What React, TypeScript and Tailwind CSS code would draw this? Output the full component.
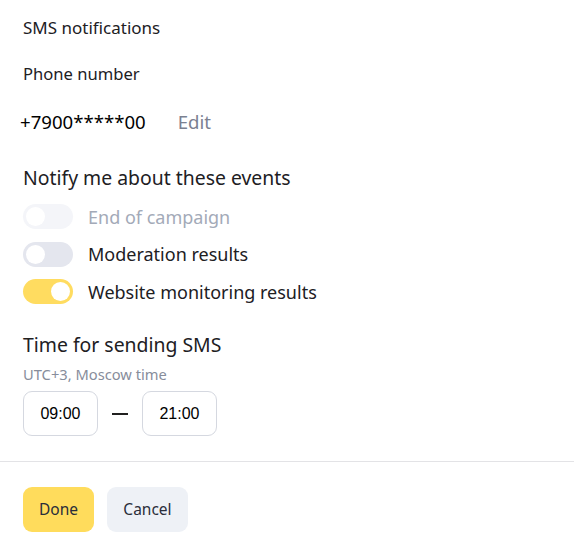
import { Fragment } from "react";

type ToggleState = "disabled" | "off" | "on";

interface NotifyOption {
	label: string;
	state: ToggleState;
}

const options: NotifyOption[] = [
	{ label: "End of campaign", state: "disabled" },
	{ label: "Moderation results", state: "off" },
	{ label: "Website monitoring results", state: "on" },
];

function Toggle({ state }: { state: ToggleState }) {
	const track =
		state === "on" ? "bg-[#ffdc60]" : state === "off" ? "bg-[#e4e6ee]" : "bg-[#f4f5f9]";
	return (
		<span className={`flex h-[25px] w-[50px] shrink-0 items-center rounded-full px-[3px] ${track}`}>
			<span
				className={`h-[19px] w-[19px] rounded-full bg-white ${state === "on" ? "ml-auto" : ""}`}
			/>
		</span>
	);
}

export default function App() {
	return (
		<div
			className="w-[574px] bg-white text-[#21201f]"
			style={{ fontFamily: '"Noto Sans", "Open Sans", sans-serif' }}>
			<div className="px-[23px] pt-[17px]">
				<div className="text-[17px] leading-[22px]">SMS notifications</div>
				<div className="mt-[24px] text-[16.6px] leading-[22px]">Phone number</div>
				<div className="mt-[25px] flex items-center text-[18.6px] leading-[24px]">
					<span className="-ml-[3px] text-black">+7900*****00</span>
					<span className="ml-[32px] text-[#7b8191]">Edit</span>
				</div>

				<div className="mt-[31px] text-[19.4px] leading-[26px]">Notify me about these events</div>
				<div className="mt-[13px] flex flex-col gap-[12.5px]">
					{options.map((option) => (
						<Fragment key={option.label}>
							<div className="flex items-center gap-[15px]">
								<Toggle state={option.state} />
								<span
									className={`text-[18px] leading-[24px] ${
										option.state === "disabled" ? "text-[#a3aab8]" : ""
									}`}>
									{option.label}
								</span>
							</div>
						</Fragment>
					))}
				</div>

				<div className="mt-[28px] text-[19.4px] leading-[26px]">Time for sending SMS</div>
				<div className="mt-[7px] text-[14.7px] leading-[18px] text-[#878d9b]">UTC+3, Moscow time</div>
				<div className="mt-[8px] flex items-center">
					<div
						className="flex h-[45px] w-[75px] items-center justify-center rounded-[9px] border border-[#d5d8e0] text-[16px] text-black"
						style={{ fontFamily: '"Liberation Sans", Arial, sans-serif' }}>
						09:00
					</div>
					<span className="mx-[14px] h-[2px] w-[16px] bg-[#21201f]" />
					<div
						className="flex h-[45px] w-[75px] items-center justify-center rounded-[9px] border border-[#d5d8e0] text-[16px] text-black"
						style={{ fontFamily: '"Liberation Sans", Arial, sans-serif' }}>
						21:00
					</div>
				</div>
			</div>

			<div className="mt-[25px] h-px w-full bg-[#e3e3e6]" />

			<div className="flex gap-[13px] px-[23px] pt-[25px] pb-[19px]">
				<button className="h-[45px] w-[71px] rounded-[9px] bg-[#ffdc5c] text-[15.5px] text-[#2a2e3a]">
					Done
				</button>
				<button className="h-[45px] w-[81px] rounded-[9px] bg-[#eef1f6] text-[15.5px] text-[#2a2e3a]">
					Cancel
				</button>
			</div>
		</div>
	);
}
